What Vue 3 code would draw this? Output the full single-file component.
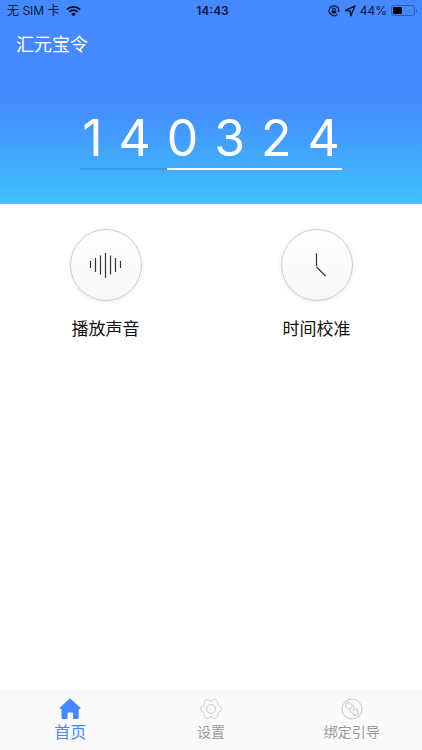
<template>
  <div class="page">
    <header class="hero">
      <div class="status">
        <div class="status__side">
          <span>无 SIM 卡</span>
          <svg class="wifi" viewBox="0 0 16 12" width="15" height="12">
            <path d="M1 4.4a10 10 0 0 1 14 0" />
            <path d="M3.5 7a6.4 6.4 0 0 1 9 0" />
            <path class="wifi__dot" d="M5.6 9.1a3.4 3.4 0 0 1 4.8 0L8 11.6z" />
          </svg>
        </div>
        <span class="status__time">14:43</span>
        <div class="status__side status__side--end">
          <svg class="lock" viewBox="0 0 12 12" width="12" height="12">
            <path d="M10 2.7A5 5 0 1 0 9.6 9.4M10 2.7A5 5 0 0 1 10.9 6" />
            <path class="fill" d="M9.3 5.4h2.7l-1.3 2zM3.6 5.4h4.8v3.2H3.6z" />
            <path d="M4.7 5.5V4.4a1.3 1.3 0 0 1 2.6 0v1.1" />
          </svg>
          <svg class="arrow" viewBox="0 0 12 12" width="12" height="12">
            <path d="M11 1 1.4 5.4 6.200 6l.6 4.800z" />
          </svg>
          <span>44%</span>
          <svg class="battery" viewBox="0 0 27 12" width="27" height="12">
            <rect class="battery__case" x="0.5" y="0.5" width="23" height="10" rx="2.5" />
            <rect x="2" y="2" width="9" height="7" rx="1" />
            <path class="battery__cap" d="M25 4c1.6.5 1.6 3 0 3.500z" />
          </svg>
        </div>
      </div>
      <h1 class="title">汇元宝令</h1>
      <div class="token">
        <div class="token__code">
          <span v-for="(digit, i) in code" :key="i">{{ digit }}</span>
        </div>
        <div class="token__track">
          <div class="token__left" :style="{ width: remaining + '%' }"></div>
        </div>
      </div>
    </header>

    <main class="actions">
      <button class="action" type="button">
        <span class="action__icon">
          <svg viewBox="0 0 70 70" width="70" height="70">
            <path d="M19.500 31v7M24.500 28v14M29.500 25.500v19M34.500 23v25M39.500 25.500v19M44.500 28v14M49.500 31v7" />
          </svg>
        </span>
        <span>播放声音</span>
      </button>
      <button class="action" type="button">
        <span class="action__icon">
          <svg viewBox="0 0 70 70" width="70" height="70">
            <path d="M34.500 23.500V36M34.500 37l9 9" />
          </svg>
        </span>
        <span>时间校准</span>
      </button>
    </main>

    <nav class="tabs">
      <button
        v-for="tab in tabs"
        :key="tab.id"
        class="tab"
        :class="{ 'tab--active': active === tab.id }"
        type="button"
        @click="active = tab.id"
      >
        <svg v-if="tab.id === 'home'" class="tab__home" viewBox="0 0 22 22" width="22" height="22">
          <path d="M10.2.9a1.2 1.2 0 0 1 1.6 0l9.4 8.600c.7.7.3 1.400-.5 1.400h-1V20q0 1-1 1H14v-5.500q0-1-1-1H9.500q-1 0-1 1V21H3.500q-1 0-1-1v-9.100h-1c-.8 0-1.200-.7-.5-1.400z" />
        </svg>
        <svg v-else-if="tab.id === 'settings'" viewBox="0 0 22 22" width="22" height="22">
          <path :d="gearPath" />
          <circle cx="11" cy="11" r="4.5" />
        </svg>
        <svg v-else viewBox="0 0 22 22" width="22" height="22">
          <circle cx="11" cy="11" r="10" />
          <g transform="translate(11 11) rotate(45)">
            <path :d="linkPath" />
            <path :d="linkPath" transform="rotate(180)" />
          </g>
        </svg>
        <span>{{ tab.label }}</span>
      </button>
    </nav>
  </div>
</template>

<script setup>
import { ref } from 'vue';

const code = ref('140324');
const remaining = ref(67);
const active = ref('home');

const tabs = [
  { id: 'home', label: '首页' },
  { id: 'settings', label: '设置' },
  { id: 'guide', label: '绑定引导' },
];

// one half of the chain, the other is the same turned around
const linkPath = 'M-1.8 2.8H-5a2.8 2.8 0 0 1 0-5.6H-1a2.8 2.8 0 0 1 2.6 3.8';

// six rounded teeth around the centre
const gearPoints = Array.from({ length: 120 }, (_, i) => {
  const a = (i * Math.PI) / 60;
  const r = 9.1 + 1.2 * Math.tanh(1.6 * Math.cos(6 * a) + 0.4);
  return `${(11 + r * Math.cos(a)).toFixed(2)} ${(11 + r * Math.sin(a)).toFixed(2)}`;
});
const gearPath = `M${gearPoints.join('L')}Z`;
</script>

<style>
body { margin: 0; background: #fff; }
</style>

<style scoped>
.page {
  min-height: 100vh;
  display: flex;
  flex-direction: column;
  font-family: Inter, "Noto Sans CJK SC", sans-serif;
}
button { border: 0; padding: 0; background: none; font: inherit; cursor: pointer; }
svg { display: block; fill: none; }

/* Header */
.hero {
  background: linear-gradient(#4489ff 0, #4489ff 48%, #40c0ff 100%);
  color: #fff;
  padding-bottom: 34px;
}

.status {
  display: grid;
  grid-template-columns: 1fr auto 1fr;
  align-items: center;
  height: 22px;
  padding: 0 4px 0 7px;
  font-size: 12px;
  line-height: 22px;
  color: #0b1730;
}
.status__side { display: flex; align-items: center; gap: 6px; }
.status__side--end { gap: 4px; justify-content: flex-end; }
.status__time { font-weight: 600; }
.wifi { stroke: #050b18; stroke-width: 2; }
.wifi__dot { fill: #050b18; stroke: none; }
.lock { stroke: #0b1730; stroke-width: 1.2; }
.fill { fill: #0b1730; stroke: none; }
.arrow { stroke: #0b1730; stroke-width: 1.4; stroke-linejoin: round; }
.battery { fill: #000; }
.battery__case { fill: none; stroke: #2c5cae; }
.battery__cap { fill: #2c5cae; }

.title {
  margin: 0;
  padding: 0 16px;
  font-size: 18px;
  line-height: 46px;
  font-weight: 400;
}

/* Token */
.token { width: 62%; margin: 40px auto 0; }
.token__code {
  display: flex;
  justify-content: space-between;
  padding: 0 2px;
  font-size: 50px;
  line-height: 60px;
}
.token__track { height: 2px; background: #369ee9; }
.token__left { height: 2px; margin-left: auto; background: #fff; }

/* Actions */
.actions {
  flex: 1;
  display: grid;
  grid-template-columns: 1fr 1fr;
  align-items: start;
  padding-top: 25px;
}
.action {
  display: flex;
  flex-direction: column;
  align-items: center;
  gap: 15px;
  font-size: 17px;
  line-height: 26px;
  color: #111;
}
.action__icon {
  border: 1px solid #cdcdd0;
  border-radius: 50%;
  background: linear-gradient(#fff, #f7f7f7);
  box-shadow: 0 1px 5px rgba(0, 0, 0, .08);
}
.action__icon svg { stroke: #333; stroke-width: 1.2; }

/* Tabs */
.tabs {
  display: grid;
  grid-template-columns: repeat(3, 1fr);
  height: 61px;
  background: #fafafa;
}
.tab {
  display: flex;
  flex-direction: column;
  align-items: center;
  gap: 2px;
  padding-top: 9px;
  font-size: 14px;
  line-height: 20px;
  color: #999;
}
.tab svg { stroke: #c8c8c8; stroke-width: 1; }
.tab--active { font-size: 16px; color: #4489ff; }
.tab .tab__home { fill: #4489ff; stroke: none; }
</style>
